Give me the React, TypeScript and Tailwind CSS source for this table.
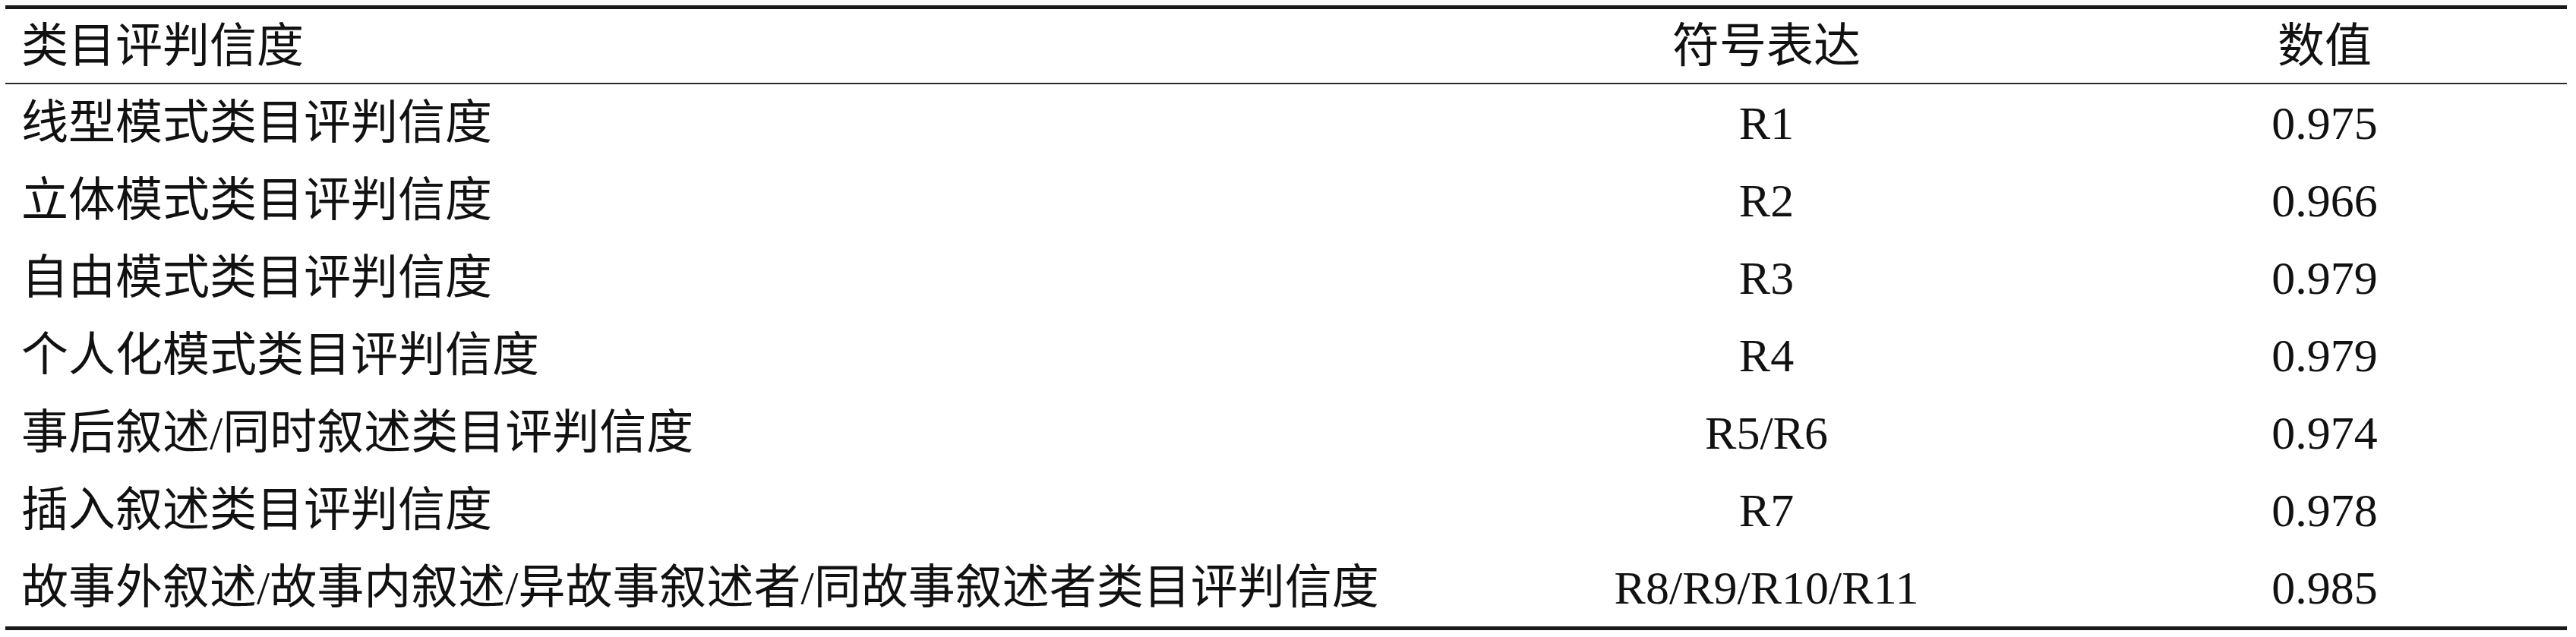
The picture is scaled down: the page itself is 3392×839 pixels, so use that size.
const rows = [
    { name: "线型模式类目评判信度", symbol: "R1", value: "0.975" },
    { name: "立体模式类目评判信度", symbol: "R2", value: "0.966" },
    { name: "自由模式类目评判信度", symbol: "R3", value: "0.979" },
    { name: "个人化模式类目评判信度", symbol: "R4", value: "0.979" },
    { name: "事后叙述/同时叙述类目评判信度", symbol: "R5/R6", value: "0.974" },
    { name: "插入叙述类目评判信度", symbol: "R7", value: "0.978" },
    { name: "故事外叙述/故事内叙述/异故事叙述者/同故事叙述者类目评判信度", symbol: "R8/R9/R10/R11", value: "0.985" },
];

const font = "font-['Liberation_Serif','Noto_Sans_CJK_SC',serif]";

export default function App() {
    return (
        <div className={`w-[3392px] h-[839px] bg-white pt-[7px] px-[7px] text-[#111] text-[62px] leading-none ${font}`}>
            <div className="w-[3373px] border-t-[5px] border-b-[5px] border-[#1a1a1a]">
                <div className="grid grid-cols-[1903px_832px_638px] h-[99px] items-center border-b-[2px] border-[#2a2a2a]">
                    <div className="pl-[21px]">类目评判信度</div>
                    <div className="text-center">符号表达</div>
                    <div className="text-center">数值</div>
                </div>
                {rows.map((row) => (
                    <div key={row.symbol} className="grid grid-cols-[1903px_832px_638px] h-[102px] items-center">
                        <div className="pl-[21px] whitespace-nowrap">{row.name}</div>
                        <div className="text-center">{row.symbol}</div>
                        <div className="text-center">{row.value}</div>
                    </div>
                ))}
            </div>
        </div>
    );
}
